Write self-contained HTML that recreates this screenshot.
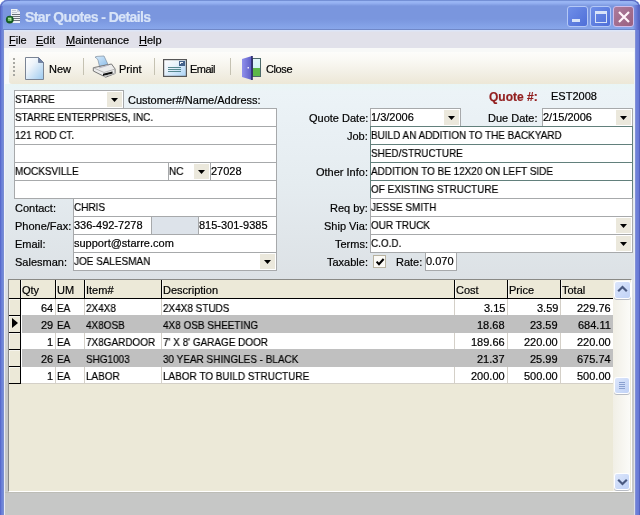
<!DOCTYPE html><html><head><meta charset="utf-8"><style>

*{box-sizing:border-box;margin:0;padding:0}
html,body{width:640px;height:515px;overflow:hidden;background:#fff;font-family:"Liberation Sans", sans-serif;font-size:11px;color:#000}
.abs{position:absolute}
.t{position:absolute;white-space:pre;line-height:13px;font-size:11px;will-change:transform;-webkit-text-stroke:0.2px currentColor}
.cap{transform:scaleX(0.905);transform-origin:0 0}
.tb{position:absolute;background:#fff;border:1px solid #a7a9ab;height:19px}
.tb .t{top:2px;left:0px}
.dd{position:absolute;top:1px;right:1px;width:15px;height:15px;background:#ebe8dc}
.dd:after{content:"";position:absolute;left:4px;top:6px;width:7px;height:4px;background:#000;clip-path:polygon(0 0,100% 0,50% 100%)}
.lbl{position:absolute;white-space:pre;line-height:13px;font-size:11px;text-align:right;will-change:transform;-webkit-text-stroke:0.2px currentColor}

</style></head><body>
<div class="abs" style="left:0;top:0;width:640px;height:515px;background:#6a7fd6;border-radius:7px 7px 0 0"></div>
<div class="abs" style="left:0;top:8px;width:4px;height:507px;background:linear-gradient(90deg,#5060c8,#6a80d8 40%,#7088d8 70%,#8090d0)"></div>
<div class="abs" style="left:635px;top:8px;width:5px;height:507px;background:linear-gradient(90deg,#8a98d4,#6e80da 30%,#6a7cd4 70%,#4a56b8)"></div>
<div class="abs" style="left:0;top:0;width:640px;height:30px;border-radius:7px 7px 0 0;background:linear-gradient(180deg,#7490d6 0px,#7490d6 1px,#9ab6f4 1px,#96b2f2 3px,#7a96de 6px,#7a96de 19px,#82a0e6 25px,#88a6ea 29px,#7088c8 29px,#7088c8 30px)"></div>
<div class="abs" style="left:0;top:6px;width:3px;height:24px;background:linear-gradient(90deg,#5a6cd0,#7088dc)"></div>
<div class="abs" style="left:633px;top:5px;width:7px;height:25px;background:linear-gradient(90deg,rgba(112,136,220,0),#6878d4 50%,#4e5cbc)"></div>
<div class="abs" style="left:620px;top:0px;width:20px;height:20px;border-top-right-radius:8px;border-top:1px solid #5868c0;border-right:1px solid #5868c0"></div>
<div class="abs" style="left:0px;top:0px;width:20px;height:20px;border-top-left-radius:8px;border-top:1px solid #6478c8;border-left:1px solid #5868c0"></div>
<svg class="abs" style="left:0px;top:0px" width="26" height="28" viewBox="0 0 26 28">
<path d="M11 9h6l3 3v11h-9z" fill="#eef2f6"/>
<path d="M17 9v3h3" fill="#c8d0dc"/>
<rect x="12" y="10" width="4" height="1" fill="#c0c8d4"/><rect x="12" y="12" width="5" height="1" fill="#c0c8d4"/>
<rect x="12" y="14" width="8" height="1" fill="#6a727c"/><rect x="12" y="16" width="8" height="1" fill="#6a727c"/>
<rect x="12" y="18" width="8" height="1" fill="#6a727c"/><rect x="12" y="20" width="8" height="1" fill="#6a727c"/>
<circle cx="9.8" cy="19.6" r="3.9" fill="#145a22"/><circle cx="9.5" cy="19.1" r="2.6" fill="#24742e"/>
<path d="M8 18.2h2.8v2.8M9 18.5v2.5" stroke="#b8f0a8" stroke-width="1.1" fill="none"/>
</svg>
<div class="t" style="left:25px;top:9px;font-size:14px;line-height:16px;font-weight:bold;color:#d8e4f8;letter-spacing:-0.58px">Star Quotes - Details</div>
<div class="abs" style="left:567px;top:6px;width:21px;height:21px;border:1px solid #b4c8f6;border-radius:3px;background:linear-gradient(135deg,#6f8fe8,#4f6fd8)"><div class="abs" style="left:4px;top:12px;width:8px;height:3px;background:#d8e4f8"></div></div>
<div class="abs" style="left:590px;top:6px;width:21px;height:21px;border:1px solid #b4c8f6;border-radius:3px;background:linear-gradient(135deg,#6f8fe8,#4f6fd8)"><div class="abs" style="left:4px;top:4px;width:12px;height:12px;border:1px solid #d8e4f8;border-top-width:3px"></div></div>
<div class="abs" style="left:613px;top:6px;width:21px;height:21px;border:1px solid #d0bcea;border-radius:3px;background:linear-gradient(135deg,#ac7c9c,#9a6080)"><svg class="abs" style="left:3px;top:3px" width="14" height="14"><path d="M2 2L12 12M12 2L2 12" stroke="#fff4fa" stroke-width="2.2"/></svg></div>
<div class="abs" style="left:4px;top:30px;width:631px;height:18px;background:linear-gradient(180deg,#dde6f8 0px,#dde6f8 1px,#e1e1ea 2px,#e1e1ea 18px)"></div>
<div class="t" style="left:9px;top:34px"><span style="text-decoration:underline">F</span>ile</div>
<div class="t" style="left:36px;top:34px"><span style="text-decoration:underline">E</span>dit</div>
<div class="t" style="left:66px;top:34px"><span style="text-decoration:underline">M</span>aintenance</div>
<div class="t" style="left:139px;top:34px"><span style="text-decoration:underline">H</span>elp</div>
<div class="abs" style="left:4px;top:48px;width:631px;height:36px;background:#f8f9f8"></div>
<div class="abs" style="left:9px;top:52px;width:626px;height:32px;border-radius:3px 0 0 3px;background:linear-gradient(180deg,#fdfdfb 0px,#faf9f4 8px,#f3f0e6 20px,#ede8d8 31px)"></div>
<div class="abs" style="left:13px;top:58px;width:2px;height:2px;background:#a8a8a2"></div>
<div class="abs" style="left:13px;top:62px;width:2px;height:2px;background:#a8a8a2"></div>
<div class="abs" style="left:13px;top:66px;width:2px;height:2px;background:#a8a8a2"></div>
<div class="abs" style="left:13px;top:70px;width:2px;height:2px;background:#a8a8a2"></div>
<div class="abs" style="left:13px;top:74px;width:2px;height:2px;background:#a8a8a2"></div>
<div class="abs" style="left:83px;top:58px;width:1px;height:17px;background:#c5c2b2"></div>
<div class="abs" style="left:154px;top:58px;width:1px;height:17px;background:#c5c2b2"></div>
<div class="abs" style="left:230px;top:58px;width:1px;height:17px;background:#c5c2b2"></div>
<svg class="abs" style="left:25px;top:57px" width="19" height="23" viewBox="0 0 19 23">
<defs><linearGradient id="gn" x1="0" y1="0" x2="1" y2="1"><stop offset="0" stop-color="#ffffff"/><stop offset="0.35" stop-color="#eef4fa"/><stop offset="1" stop-color="#9ccaf0"/></linearGradient></defs>
<path d="M0.5 0.5h13l5 5v17h-18z" fill="url(#gn)" stroke="#7a8494"/>
<path d="M13.5 0.5v5h5z" fill="#6f82a4" stroke="#6a7898" stroke-width="0.8"/>
</svg>
<div class="t" style="left:49px;top:63px">New</div>
<svg class="abs" style="left:92px;top:54px" width="25" height="25" viewBox="0 0 25 25">
<defs><linearGradient id="gp" x1="0" y1="0" x2="1" y2="1"><stop offset="0" stop-color="#d8ecfc"/><stop offset="1" stop-color="#8cbce8"/></linearGradient></defs>
<path d="M3 3.2Q4 2.5 5 2.4L12 2l4 8.5-8.5 1.8L6 6Q5 4 3 3.2z" fill="url(#gp)" stroke="#8898a8" stroke-width="0.8"/>
<path d="M1.3 13.7L19.5 10l3.6 5v4.5L13.7 23.2 1.3 17z" fill="#ececec" stroke="#6a6a6a" stroke-width="0.9"/>
<path d="M1.3 13.7L12 18.5l11.1-3.5" fill="none" stroke="#a8a8a8" stroke-width="0.8"/>
<path d="M7 14l10-3" stroke="#b8b8c8" stroke-width="1"/>
<path d="M11 19.8l9.5-2.2v2.2L11 22z" fill="#111"/>
<path d="M11 22.5l10-2.5 2.5-1" stroke="#c8c8c8" stroke-width="1"/>
</svg>
<div class="t" style="left:119px;top:63px">Print</div>
<svg class="abs" style="left:163px;top:59px" width="24" height="18" viewBox="0 0 24 18">
<defs><linearGradient id="ge" x1="0" y1="0" x2="1" y2="1"><stop offset="0" stop-color="#ffffff"/><stop offset="0.4" stop-color="#e8f2fb"/><stop offset="1" stop-color="#a8d2f6"/></linearGradient></defs>
<rect x="0.6" y="0.6" width="22.8" height="16.8" fill="url(#ge)" stroke="#565656" stroke-width="1.2"/>
<rect x="16" y="2" width="6" height="5" fill="#44628a"/><rect x="17" y="3" width="1" height="2" fill="#f0f4f8"/><rect x="17" y="3" width="3" height="1" fill="#f0f4f8"/>
<rect x="5" y="8" width="13" height="1" fill="#568890"/><rect x="5" y="10" width="13" height="1" fill="#568890"/><rect x="5" y="12" width="13" height="1" fill="#568890"/>
</svg>
<div class="t" style="left:190px;top:63px;letter-spacing:-0.5px">Email</div>
<svg class="abs" style="left:241px;top:55px" width="21" height="26" viewBox="0 0 21 26">
<defs><linearGradient id="gd" x1="0" y1="0" x2="1" y2="0"><stop offset="0" stop-color="#9090ec"/><stop offset="1" stop-color="#5c5cc4"/></linearGradient>
<linearGradient id="gs" x1="0" y1="0" x2="0" y2="1"><stop offset="0" stop-color="#e4f6fa"/><stop offset="1" stop-color="#c4eef0"/></linearGradient></defs>
<rect x="11.5" y="3.5" width="8" height="18" fill="url(#gs)" stroke="#4e6a6a"/>
<rect x="12" y="13" width="7" height="8" fill="#5cb848"/>
<path d="M1 4l10-3v24l-10-3z" fill="url(#gd)"/>
<path d="M11 1v24" stroke="#2a2a68" stroke-width="1.6"/>
<rect x="6.5" y="12" width="1.5" height="1.5" fill="#f0f0ff"/>
</svg>
<div class="t" style="left:266px;top:63px;letter-spacing:-0.4px">Close</div>
<div class="abs" style="left:4px;top:84px;width:631px;height:196px;background:linear-gradient(180deg,#e9f5f5 0px,#ecf3f7 8px,#e5ecf0 100px,#dce1e5 196px)"></div>
<div class="tb" style="left:14px;top:90px;width:110px;height:19px;"><div class="t cap">STARRE</div><div class="dd"></div></div>
<div class="t" style="left:128px;top:94px;">Customer#/Name/Address:</div>
<div class="tb" style="left:14px;top:108px;width:263px;height:19px;"><div class="t cap">STARRE ENTERPRISES, INC.</div></div>
<div class="tb" style="left:14px;top:126px;width:263px;height:19px;"><div class="t cap">121 ROD CT.</div></div>
<div class="tb" style="left:14px;top:144px;width:263px;height:19px;"></div>
<div class="tb" style="left:14px;top:162px;width:155px;height:19px;"><div class="t cap">MOCKSVILLE</div></div>
<div class="tb" style="left:168px;top:162px;width:43px;height:19px;"><div class="t cap">NC</div><div class="dd"></div></div>
<div class="tb" style="left:210px;top:162px;width:67px;height:19px;"><div class="t">27028</div></div>
<div class="tb" style="left:14px;top:180px;width:263px;height:19px;"></div>
<div class="t" style="left:15px;top:202px;">Contact:</div>
<div class="tb" style="left:73px;top:198px;width:204px;height:19px;"><div class="t cap">CHRIS</div></div>
<div class="t" style="left:15px;top:220px;">Phone/Fax:</div>
<div class="tb" style="left:73px;top:216px;width:79px;height:19px;"><div class="t">336-492-7278</div></div>
<div class="tb" style="left:151px;top:216px;width:48px;height:19px;background:#dde3ea;"></div>
<div class="tb" style="left:198px;top:216px;width:79px;height:19px;"><div class="t">815-301-9385</div></div>
<div class="t" style="left:15px;top:238px;">Email:</div>
<div class="tb" style="left:73px;top:234px;width:204px;height:19px;"><div class="t">support@starre.com</div></div>
<div class="t" style="left:15px;top:256px;">Salesman:</div>
<div class="tb" style="left:73px;top:252px;width:204px;height:19px;"><div class="t cap">JOE SALESMAN</div><div class="dd"></div></div>
<div class="t" style="left:489px;top:91px;font-size:12px;font-weight:bold;color:#921e1e">Quote #:</div>
<div class="t" style="left:551px;top:90px;">EST2008</div>
<div class="lbl" style="right:272px;top:112px">Quote Date:</div>
<div class="tb" style="left:370px;top:108px;width:91px;height:19px;"><div class="t">1/3/2006</div><div class="dd"></div></div>
<div class="lbl" style="right:102px;top:112px">Due Date:</div>
<div class="tb" style="left:542px;top:108px;width:91px;height:19px;"><div class="t">2/15/2006</div><div class="dd"></div></div>
<div class="lbl" style="right:272px;top:130px">Job:</div>
<div class="tb" style="left:370px;top:126px;width:263px;height:19px;border-color:#62807c;"><div class="t cap">BUILD AN ADDITION TO THE BACKYARD</div></div>
<div class="tb" style="left:370px;top:144px;width:263px;height:19px;border-color:#62807c;"><div class="t cap">SHED/STRUCTURE</div></div>
<div class="lbl" style="right:272px;top:166px">Other Info:</div>
<div class="tb" style="left:370px;top:162px;width:263px;height:19px;border-color:#62807c;"><div class="t cap">ADDITION TO BE 12X20 ON LEFT SIDE</div></div>
<div class="tb" style="left:370px;top:180px;width:263px;height:19px;border-color:#62807c;"><div class="t cap">OF EXISTING STRUCTURE</div></div>
<div class="lbl" style="right:272px;top:202px">Req by:</div>
<div class="tb" style="left:370px;top:198px;width:263px;height:19px;"><div class="t cap">JESSE SMITH</div></div>
<div class="lbl" style="right:272px;top:220px">Ship Via:</div>
<div class="tb" style="left:370px;top:216px;width:263px;height:19px;"><div class="t cap">OUR TRUCK</div><div class="dd"></div></div>
<div class="lbl" style="right:272px;top:238px">Terms:</div>
<div class="tb" style="left:370px;top:234px;width:263px;height:19px;"><div class="t cap">C.O.D.</div><div class="dd"></div></div>
<div class="lbl" style="right:272px;top:256px">Taxable:</div>
<div class="abs" style="left:373px;top:255px;width:13px;height:13px;border:1px solid #b8b2a0;background:#fbfaf6">
<svg class="abs" style="left:1px;top:1px" width="10" height="10"><path d="M1.6 4.6l2.4 2.6 4.6-5.2" stroke="#000" stroke-width="2" fill="none"/></svg></div>
<div class="lbl" style="right:218px;top:256px">Rate:</div>
<div class="tb" style="left:425px;top:252px;width:32px;height:19px;"><div class="t">0.070</div></div>
<div class="abs" style="left:4px;top:280px;width:631px;height:235px;background:#c6c7c6"></div>
<div class="abs" style="left:5px;top:280px;width:3px;height:110px;background:linear-gradient(180deg,#dfe3e8,#c6c7c6)"></div>
<div class="abs" style="left:632px;top:280px;width:3px;height:110px;background:linear-gradient(180deg,#dfe3e8,#c6c7c6)"></div>
<div class="abs" style="left:8px;top:279px;width:624px;height:213px;background:#ece9d8;border-top:1px solid #8a8a86;border-left:1px solid #8a8a86;border-right:1px solid #fff;border-bottom:1px solid #fff"></div>
<div class="abs" style="left:4px;top:492px;width:631px;height:1px;background:#bdbdb6"></div>
<div class="abs" style="left:9px;top:280px;width:604px;height:18px;background:#ece9d8"></div>
<div class="abs" style="left:9px;top:298px;width:604px;height:1px;background:#000"></div>
<div class="abs" style="left:20px;top:280px;width:1px;height:18px;background:#000"></div>
<div class="abs" style="left:21px;top:280px;width:1px;height:18px;background:#f8f7f0"></div>
<div class="t" style="left:22px;top:284px">Qty</div>
<div class="abs" style="left:55px;top:280px;width:1px;height:18px;background:#000"></div>
<div class="abs" style="left:56px;top:280px;width:1px;height:18px;background:#f8f7f0"></div>
<div class="t" style="left:57px;top:284px">UM</div>
<div class="abs" style="left:84px;top:280px;width:1px;height:18px;background:#000"></div>
<div class="abs" style="left:85px;top:280px;width:1px;height:18px;background:#f8f7f0"></div>
<div class="t" style="left:86px;top:284px">Item#</div>
<div class="abs" style="left:161px;top:280px;width:1px;height:18px;background:#000"></div>
<div class="abs" style="left:162px;top:280px;width:1px;height:18px;background:#f8f7f0"></div>
<div class="t" style="left:163px;top:284px">Description</div>
<div class="abs" style="left:454px;top:280px;width:1px;height:18px;background:#000"></div>
<div class="abs" style="left:455px;top:280px;width:1px;height:18px;background:#f8f7f0"></div>
<div class="t" style="left:456px;top:284px">Cost</div>
<div class="abs" style="left:507px;top:280px;width:1px;height:18px;background:#000"></div>
<div class="abs" style="left:508px;top:280px;width:1px;height:18px;background:#f8f7f0"></div>
<div class="t" style="left:509px;top:284px">Price</div>
<div class="abs" style="left:560px;top:280px;width:1px;height:18px;background:#000"></div>
<div class="abs" style="left:561px;top:280px;width:1px;height:18px;background:#f8f7f0"></div>
<div class="t" style="left:562px;top:284px">Total</div>
<div class="abs" style="left:21px;top:299px;width:592px;height:84px;background:#fff"></div>
<div class="abs" style="left:21px;top:383px;width:592px;height:1px;background:#d4d0c8"></div>
<div class="abs" style="left:55px;top:299px;width:1px;height:84px;background:#d4d0c8"></div>
<div class="abs" style="left:84px;top:299px;width:1px;height:84px;background:#d4d0c8"></div>
<div class="abs" style="left:161px;top:299px;width:1px;height:84px;background:#d4d0c8"></div>
<div class="abs" style="left:454px;top:299px;width:1px;height:84px;background:#d4d0c8"></div>
<div class="abs" style="left:507px;top:299px;width:1px;height:84px;background:#d4d0c8"></div>
<div class="abs" style="left:560px;top:299px;width:1px;height:84px;background:#d4d0c8"></div>
<div class="abs" style="left:20px;top:299px;width:1px;height:85px;background:#000"></div>
<div class="abs" style="left:9px;top:299px;width:11px;height:16px;background:#ece9d8;border-left:1px solid #f6f5ee;border-top:1px solid #f6f5ee"></div>
<div class="abs" style="left:9px;top:315px;width:12px;height:1px;background:#000"></div>
<div class="t" style="right:587px;top:302px">64</div>
<div class="t cap" style="left:57px;top:302px">EA</div>
<div class="t cap" style="left:86px;top:302px">2X4X8</div>
<div class="t cap" style="left:163px;top:302px">2X4X8 STUDS</div>
<div class="t" style="right:135px;top:302px">3.15</div>
<div class="t" style="right:82px;top:302px">3.59</div>
<div class="t" style="right:29px;top:302px">229.76</div>
<div class="abs" style="left:22px;top:315px;width:591px;height:18px;background:#c0c0c0"></div>
<div class="abs" style="left:9px;top:316px;width:11px;height:16px;background:#ece9d8;border-left:1px solid #f6f5ee;border-top:1px solid #f6f5ee"></div>
<div class="abs" style="left:9px;top:332px;width:12px;height:1px;background:#000"></div>
<div class="t" style="right:587px;top:319px">29</div>
<div class="t cap" style="left:57px;top:319px">EA</div>
<div class="t cap" style="left:86px;top:319px">4X8OSB</div>
<div class="t cap" style="left:163px;top:319px">4X8 OSB SHEETING</div>
<div class="t" style="right:135px;top:319px">18.68</div>
<div class="t" style="right:82px;top:319px">23.59</div>
<div class="t" style="right:29px;top:319px">684.11</div>
<div class="abs" style="left:9px;top:333px;width:11px;height:16px;background:#ece9d8;border-left:1px solid #f6f5ee;border-top:1px solid #f6f5ee"></div>
<div class="abs" style="left:9px;top:349px;width:12px;height:1px;background:#000"></div>
<div class="t" style="right:587px;top:336px">1</div>
<div class="t cap" style="left:57px;top:336px">EA</div>
<div class="t cap" style="left:86px;top:336px">7X8GARDOOR</div>
<div class="t cap" style="left:163px;top:336px">7' X 8' GARAGE DOOR</div>
<div class="t" style="right:135px;top:336px">189.66</div>
<div class="t" style="right:82px;top:336px">220.00</div>
<div class="t" style="right:29px;top:336px">220.00</div>
<div class="abs" style="left:22px;top:349px;width:591px;height:18px;background:#c0c0c0"></div>
<div class="abs" style="left:9px;top:350px;width:11px;height:16px;background:#ece9d8;border-left:1px solid #f6f5ee;border-top:1px solid #f6f5ee"></div>
<div class="abs" style="left:9px;top:366px;width:12px;height:1px;background:#000"></div>
<div class="t" style="right:587px;top:353px">26</div>
<div class="t cap" style="left:57px;top:353px">EA</div>
<div class="t cap" style="left:86px;top:353px">SHG1003</div>
<div class="t cap" style="left:163px;top:353px">30 YEAR SHINGLES - BLACK</div>
<div class="t" style="right:135px;top:353px">21.37</div>
<div class="t" style="right:82px;top:353px">25.99</div>
<div class="t" style="right:29px;top:353px">675.74</div>
<div class="abs" style="left:9px;top:367px;width:11px;height:16px;background:#ece9d8;border-left:1px solid #f6f5ee;border-top:1px solid #f6f5ee"></div>
<div class="abs" style="left:9px;top:383px;width:12px;height:1px;background:#000"></div>
<div class="t" style="right:587px;top:370px">1</div>
<div class="t cap" style="left:57px;top:370px">EA</div>
<div class="t cap" style="left:86px;top:370px">LABOR</div>
<div class="t cap" style="left:163px;top:370px">LABOR TO BUILD STRUCTURE</div>
<div class="t" style="right:135px;top:370px">200.00</div>
<div class="t" style="right:82px;top:370px">500.00</div>
<div class="t" style="right:29px;top:370px">500.00</div>
<div class="abs" style="left:12px;top:318px;border-top:5.5px solid transparent;border-bottom:5.5px solid transparent;border-left:6px solid #000"></div>
<div class="abs" style="left:4px;top:48px;width:1px;height:467px;background:linear-gradient(180deg,#f4f6fa,#e8ecf4)"></div>
<div class="abs" style="left:634px;top:48px;width:1px;height:467px;background:linear-gradient(180deg,#eef4fa,#dde0ea)"></div>
<div class="abs" style="left:613px;top:280px;width:17px;height:211px;background:linear-gradient(90deg,#f1efe6,#fbfbf8)"></div>
<div class="abs" style="left:614px;top:281px;width:17px;height:18px;border-radius:3px;background:#fff;box-shadow:0 1px 0 #b8bcc4"></div>
<div class="abs" style="left:615px;top:282px;width:15px;height:16px;border-radius:2px;background:linear-gradient(135deg,#dce6fb,#c0d2f6)"><svg class="abs" style="left:2px;top:3px" width="11" height="8"><path d="M1.2 6.2L5.5 2 9.8 6.2" stroke="#4a5a80" stroke-width="2.2" fill="none"/></svg></div>
<div class="abs" style="left:614px;top:377px;width:16px;height:17px;border-radius:3px;background:#fff;box-shadow:0 1px 0 #b8bcc4"></div>
<div class="abs" style="left:615px;top:378px;width:14px;height:15px;border-radius:2px;background:linear-gradient(135deg,#dce6fb,#c0d2f6)"><div class="abs" style="left:4px;top:4px;width:6px;height:1px;background:#8aa0d0;box-shadow:0 2px #8aa0d0,0 4px #8aa0d0,0 6px #8aa0d0"></div></div>
<div class="abs" style="left:614px;top:473px;width:16px;height:17px;border-radius:3px;background:#fff;box-shadow:0 1px 0 #b8bcc4"></div>
<div class="abs" style="left:615px;top:474px;width:14px;height:15px;border-radius:2px;background:linear-gradient(135deg,#dce6fb,#c0d2f6)"><svg class="abs" style="left:2px;top:4px" width="11" height="8"><path d="M1.2 1.8L5.5 6 9.8 1.8" stroke="#4a5a80" stroke-width="2.2" fill="none"/></svg></div>
</body></html>
